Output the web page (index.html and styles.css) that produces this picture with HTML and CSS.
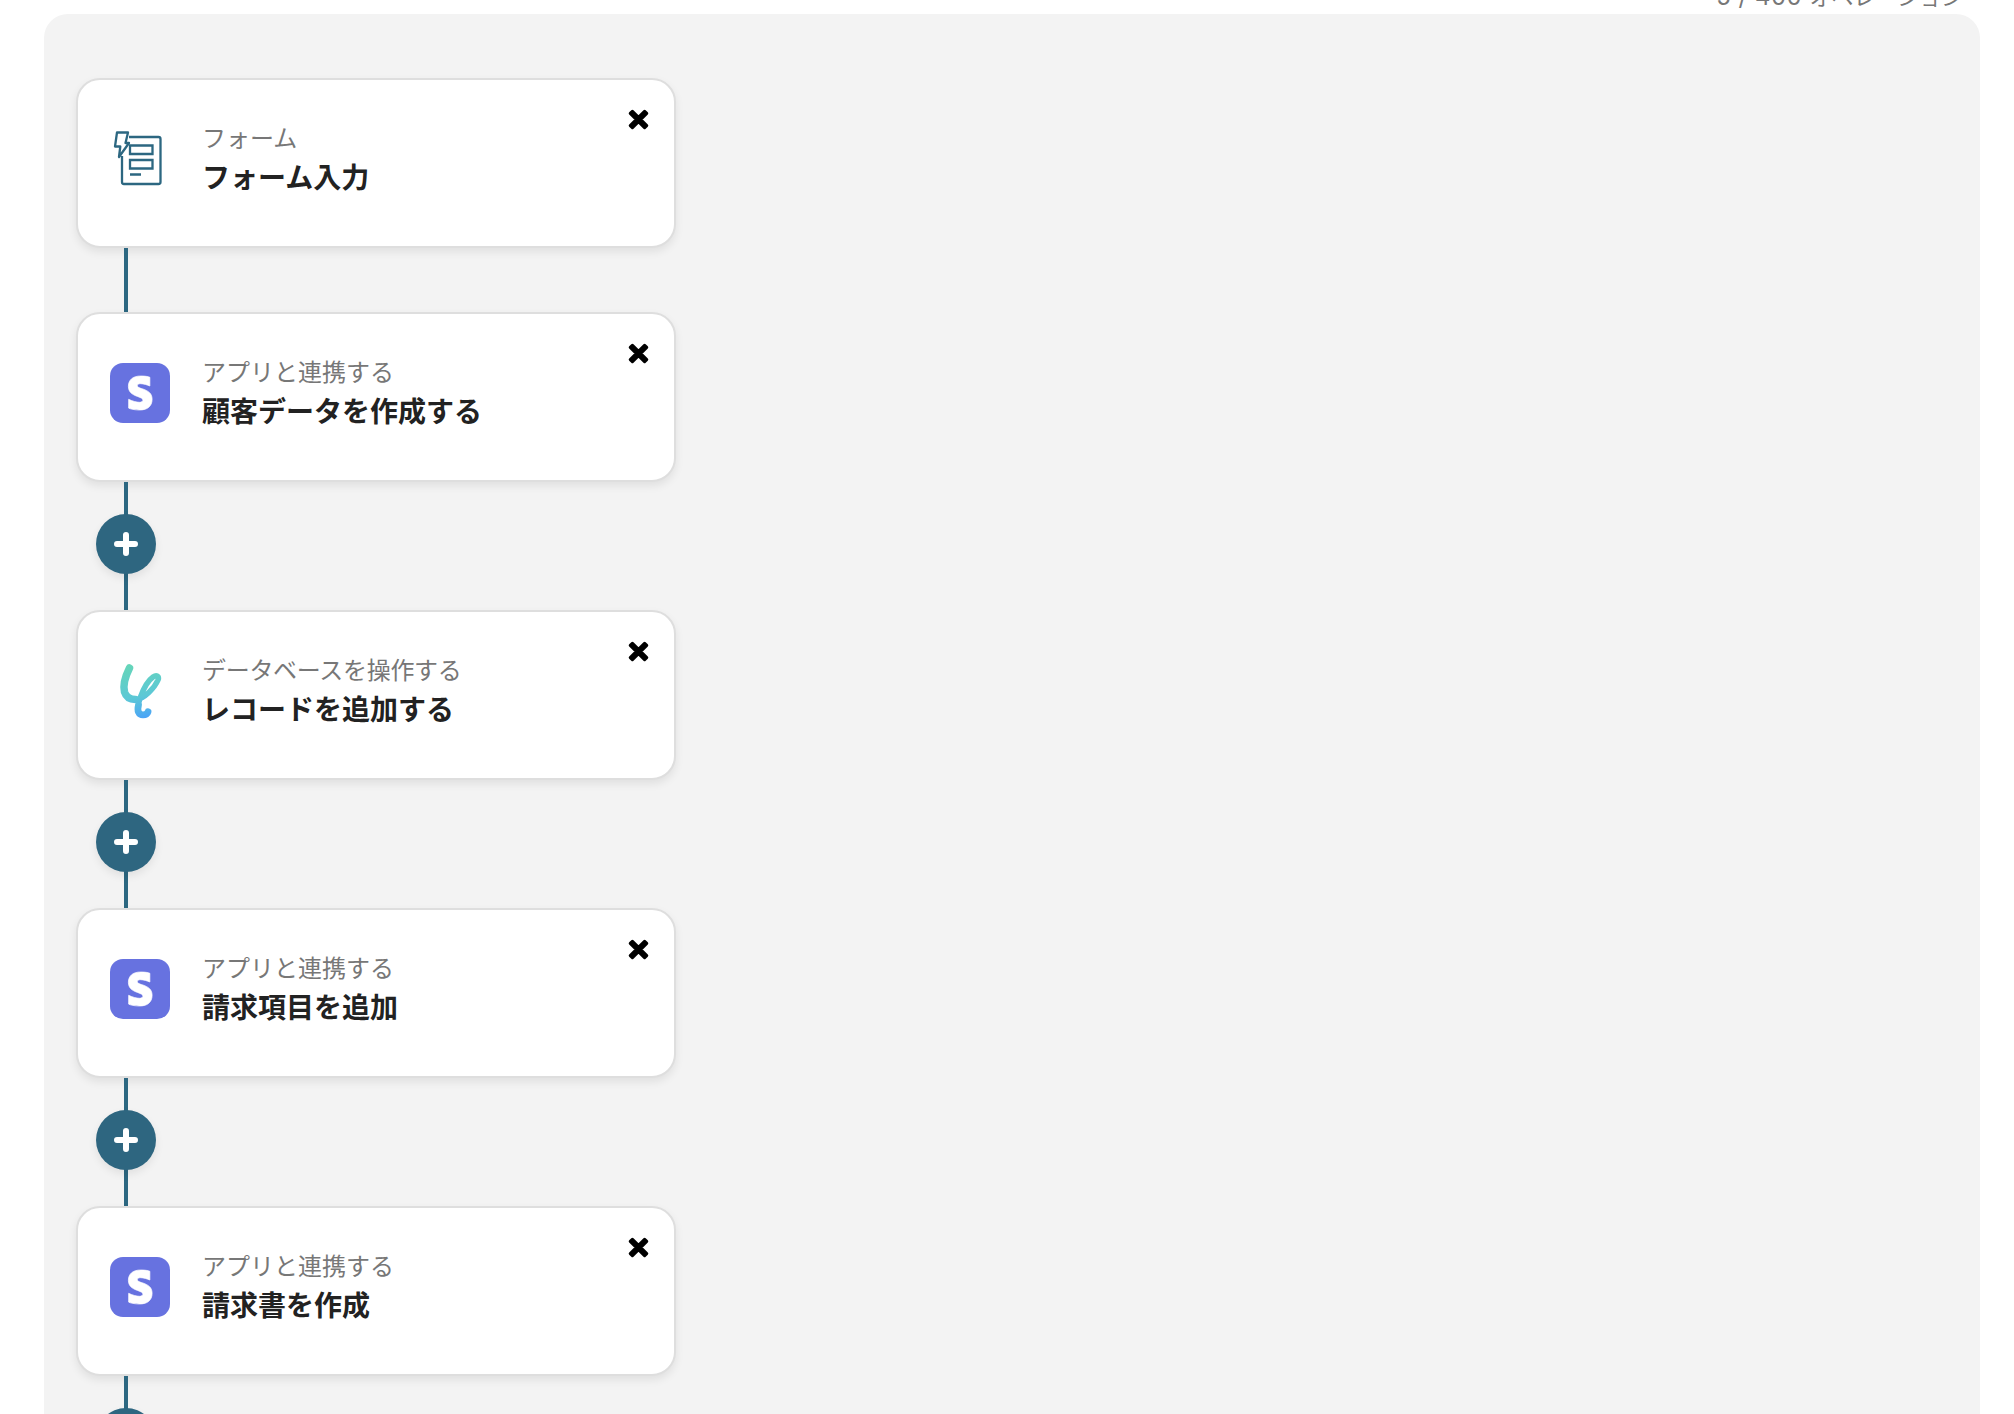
FILE: index.html
```html
<!DOCTYPE html>
<html lang="ja">

<head>
    <meta charset="UTF-8">
    <meta name="viewport" content="width=device-width, initial-scale=1.0">
    <title>フローボット</title>
    <link rel="stylesheet" href="styles.css">
</head>

<body>
    <!-- shared icons -->
    <svg class="sprite">
        <symbol id="close" viewBox="0 0 20 20">
            <path d="M4.200 2.200L10 7.900l5.800-5.700 2 2L12.100 10l5.700 5.800-2 2L10 12.100l-5.800 5.700-2-2L7.900 10 2.200 4.200z" stroke="#000" stroke-width="3" stroke-linejoin="round" />
        </symbol>
        <symbol id="plus" viewBox="0 0 24 24">
            <path d="M12 3v18M3 12h18" fill="none" stroke="#fff" stroke-width="6" stroke-linecap="round" />
        </symbol>
        <symbol id="stripe" viewBox="0 0 60 60">
            <rect width="60" height="60" rx="13" fill="#6772e0" />
            <path transform="translate(13.100 13) scale(1.410 1.417)" d="M13.976 9.150c-2.900-.806-3.900-1.426-3.900-2.409 0-.831.883-1.305 2.301-1.305 2.227 0 4.815.858 6.600 1.631V.9C17.700.4 15.697 0 12.565 0 9.667 0 7.589.654 6.104 1.872 4.560 3.147 3.757 4.992 3.757 7.218c0 4.039 2.467 5.760 6.476 7.219 2.585.92 3.845 1.574 3.845 2.583 0 .98-.84 1.545-2.554 1.545-1.875 0-5.165-.921-7.590-2.109v6.200C5.175 23.390 8.385 24 11.714 24c2.641 0 4.843-.624 6.328-1.813 1.664-1.305 2.525-3.236 2.525-5.732 0-4.128-2.524-5.851-6.594-7.305z" fill="#fff" stroke="#fff" stroke-width=".5" />
        </symbol>
    </svg>

    <p class="count"><span>5 / 400 </span>オペレーション</p>
    <main class="flow">
        <div class="card">
            <svg class="icon" viewBox="0 0 60 60" fill="none" stroke="#2c6781" stroke-width="2.300">
                <path d="M19 8H48.500a2 2 0 0 1 2 2v43a2 2 0 0 1-2 2h-34.500a2 2 0 0 1-2-2V27" />
                <path d="M20 16.500h22.500v8.500H20zM20 31h22.500v8.500H20zM20 45.500h11" />
                <path d="M7 3.500h11l-2.500 10.500H19L9 28l1.300-10.500H5z" stroke-linejoin="round" />
            </svg>
            <div class="text">
                <p class="type">フォーム</p>
                <p class="name">フォーム入力</p>
            </div>
            <svg class="close"><use href="#close" /></svg>
        </div>
        <div class="line short"></div>
        <div class="card">
            <svg class="icon"><use href="#stripe" /></svg>
            <div class="text">
                <p class="type">アプリと連携する</p>
                <p class="name">顧客データを作成する</p>
            </div>
            <svg class="close"><use href="#close" /></svg>
        </div>
        <div class="line"><button class="add"><svg><use href="#plus" /></svg></button></div>
        <div class="card">
            <svg class="icon" viewBox="0 0 60 60" fill="none">
                <defs>
                    <linearGradient id="yoom" gradientUnits="userSpaceOnUse" x1="22" y1="2" x2="34" y2="58">
                        <stop offset="0" stop-color="#66d6b8" />
                        <stop offset=".6" stop-color="#5cc8d6" />
                        <stop offset="1" stop-color="#4aa2f8" />
                    </linearGradient>
                </defs>
                <g stroke="url(#yoom)" stroke-linecap="round" stroke-linejoin="round">
                    <path d="M19.500 7C15 16 13 25 14.500 31c1.500 5 5.500 7.500 11 7.500" stroke-width="7.500" />
                    <path d="M25.500 39c9-1.500 19-12 22.500-20 1.500-4-1.500-5.500-5-3-7 5-10 13-12.500 20-1.500 4-2.500 7-2.500 11" stroke-width="5.500" />
                    <path d="M28.500 44c-1.500 6 0 9.800 4.500 9.800 3 0 4.500-1.500 5-3" stroke-width="6.800" />
                </g>
            </svg>
            <div class="text">
                <p class="type tight">データベースを操作する</p>
                <p class="name">レコードを追加する</p>
            </div>
            <svg class="close"><use href="#close" /></svg>
        </div>
        <div class="line"><button class="add"><svg><use href="#plus" /></svg></button></div>
        <div class="card">
            <svg class="icon"><use href="#stripe" /></svg>
            <div class="text">
                <p class="type">アプリと連携する</p>
                <p class="name">請求項目を追加</p>
            </div>
            <svg class="close"><use href="#close" /></svg>
        </div>
        <div class="line"><button class="add"><svg><use href="#plus" /></svg></button></div>
        <div class="card">
            <svg class="icon"><use href="#stripe" /></svg>
            <div class="text">
                <p class="type">アプリと連携する</p>
                <p class="name">請求書を作成</p>
            </div>
            <svg class="close"><use href="#close" /></svg>
        </div>
        <div class="line"><button class="add"><svg><use href="#plus" /></svg></button></div>
    </main>
</body>

</html>
```
FILE: styles.css
```css
* {
    box-sizing: border-box;
    margin: 0;
    padding: 0;
}

body {
    height: 100vh;
    overflow: hidden;
    background: #fff;
    font-family: Inter, "Noto Sans CJK JP", sans-serif;
}

.sprite {
    display: none;
}

.count {
    display: flex;
    justify-content: flex-end;
    align-items: flex-end;
    height: 14px;
    padding: 0 51px 3px 0;
    color: #777;
    font-size: 22px;
    line-height: 28px;
    white-space: pre;
}

.count span {
    font-size: 24px;
    letter-spacing: 0.5px;
}

.flow {
    margin: 0 34px 0 44px;
    padding: 64px 32px 0;
    background: #f3f3f3;
    border-radius: 24px;
}

.card {
    display: flex;
    align-items: flex-start;
    width: 600px;
    height: 170px;
    padding: 28px 25px 0 32px;
    background: #fff;
    border: 2px solid #dedede;
    border-radius: 24px;
    box-shadow: 0 4px 8px rgba(0, 0, 0, 0.08);
}

.icon {
    width: 60px;
    height: 60px;
    margin: 21px 32px 0 0;
}

.text {
    flex: 1;
    margin-top: 11px;
}

.type {
    color: #777;
    font-size: 24px;
    line-height: 40px;
}

.type.tight {
    letter-spacing: -0.3px;
}

.name {
    color: #222;
    font-size: 28px;
    font-weight: bold;
    line-height: 38px;
}

.close {
    width: 21px;
    height: 21px;
    margin-top: 1px;
}

.line {
    display: flex;
    justify-content: center;
    width: 4px;
    height: 128px;
    margin-left: 48px;
    background: #2c6781;
}

.line.short {
    height: 64px;
}

.add {
    display: flex;
    flex: none;
    align-items: center;
    justify-content: center;
    width: 60px;
    height: 60px;
    margin-top: 32px;
    background: #2e6680;
    border: none;
    border-radius: 50%;
    box-shadow: 0 4px 8px rgba(0, 0, 0, 0.08);
}

.add svg {
    width: 24px;
    height: 24px;
}
```
